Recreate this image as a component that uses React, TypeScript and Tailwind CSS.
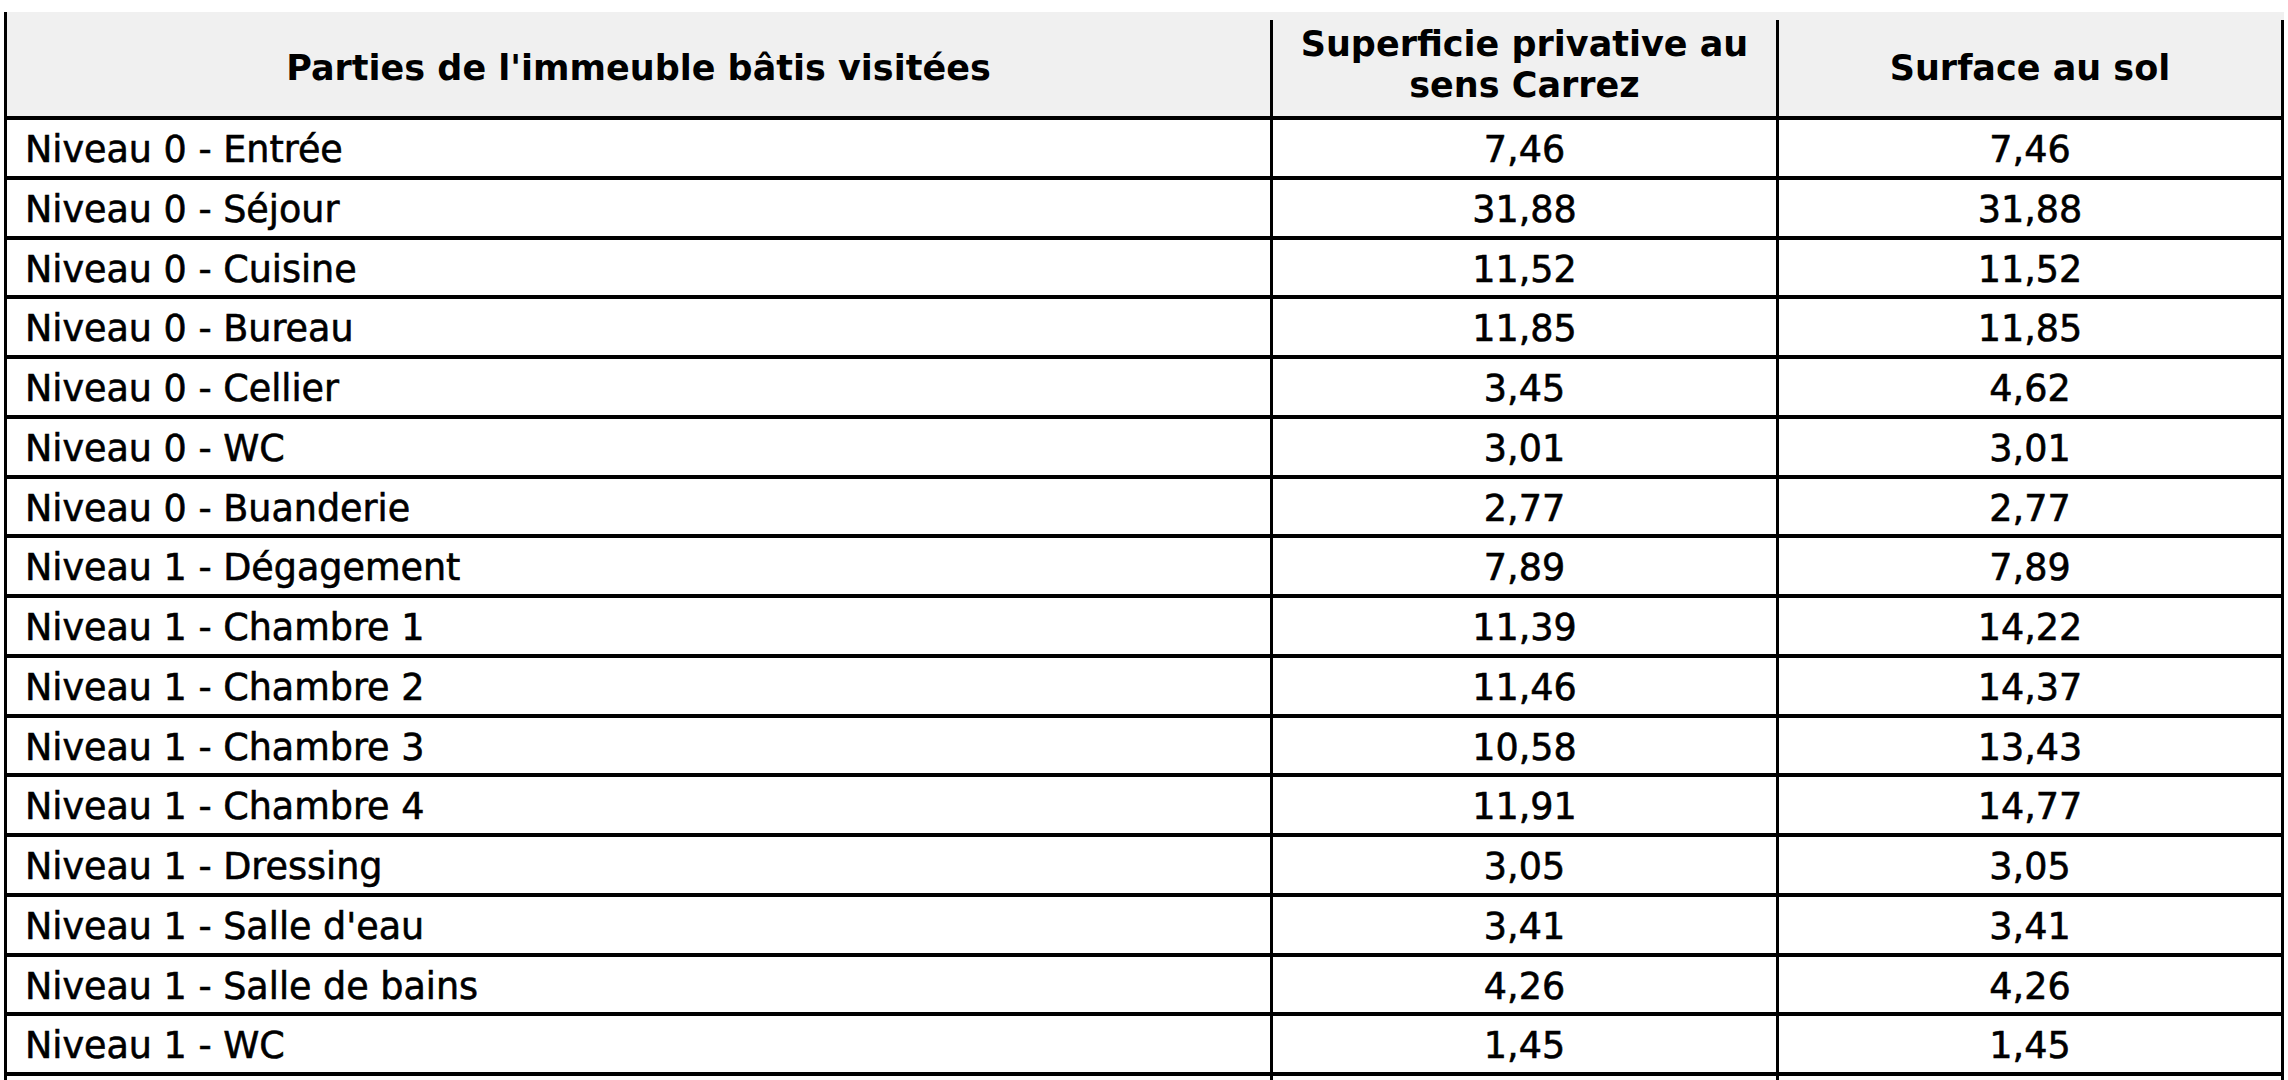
const ROWS: [string, string, string][] = [
  ["Niveau 0 - Entrée", "7,46", "7,46"],
  ["Niveau 0 - Séjour", "31,88", "31,88"],
  ["Niveau 0 - Cuisine", "11,52", "11,52"],
  ["Niveau 0 - Bureau", "11,85", "11,85"],
  ["Niveau 0 - Cellier", "3,45", "4,62"],
  ["Niveau 0 - WC", "3,01", "3,01"],
  ["Niveau 0 - Buanderie", "2,77", "2,77"],
  ["Niveau 1 - Dégagement", "7,89", "7,89"],
  ["Niveau 1 - Chambre 1", "11,39", "14,22"],
  ["Niveau 1 - Chambre 2", "11,46", "14,37"],
  ["Niveau 1 - Chambre 3", "10,58", "13,43"],
  ["Niveau 1 - Chambre 4", "11,91", "14,77"],
  ["Niveau 1 - Dressing", "3,05", "3,05"],
  ["Niveau 1 - Salle d'eau", "3,41", "3,41"],
  ["Niveau 1 - Salle de bains", "4,26", "4,26"],
  ["Niveau 1 - WC", "1,45", "1,45"],
];

const COLS = "grid grid-cols-[1266px_506px_505px]";

const HeaderCell = ({ children, className = "pt-[1px]" }: { children: React.ReactNode; className?: string }) => (
  <div
    className={`flex h-full items-center justify-center border-r-[3px] border-black text-center text-[35px] leading-[41px] font-bold ${className}`}
  >
    {children}
  </div>
);

export default function App() {
  return (
    <div
      className="h-[1080px] w-[2288px] overflow-hidden bg-white pt-[12px] pl-[4px] text-black"
      style={{ fontFamily: '"DejaVu Sans", Verdana, sans-serif' }}
    >
      <div className="w-[2280px]">
        {/* header */}
        <div className={`${COLS} h-[108px] border-b-4 border-l-[3px] border-black bg-[#f0f0f0] pt-[8px]`}>
          <HeaderCell>Parties de l'immeuble bâtis visitées</HeaderCell>
          <HeaderCell className="pb-[6px]">
            Superficie privative au
            <br />
            sens Carrez
          </HeaderCell>
          <HeaderCell>Surface au sol</HeaderCell>
        </div>

        {ROWS.map(([label, carrez, sol]) => (
          <div
            key={label}
            className={`${COLS} h-[59.75px] border-b-4 border-l-[3px] border-black text-[36.5px] leading-[42px] [-webkit-text-stroke:0.6px_#000]`}
          >
            <div className="border-r-[3px] border-black pt-[9px] pl-[18px] whitespace-nowrap">{label}</div>
            <div className="border-r-[3px] border-black pt-[9px] text-center">{carrez}</div>
            <div className="border-r-[3px] border-black pt-[9px] text-center">{sol}</div>
          </div>
        ))}

        {/* next row, cut off by the bottom of the page */}
        <div className={`${COLS} h-[59.75px] border-l-[3px] border-black`}>
          <div className="border-r-[3px] border-black" />
          <div className="border-r-[3px] border-black" />
          <div className="border-r-[3px] border-black" />
        </div>
      </div>
    </div>
  );
}
